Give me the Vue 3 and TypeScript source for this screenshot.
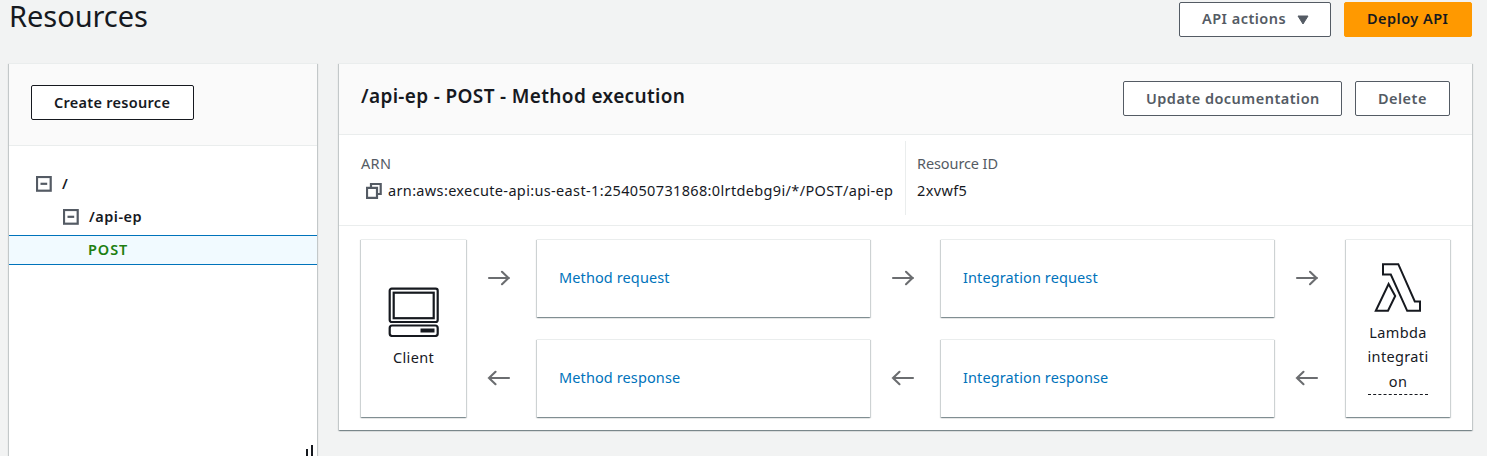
<script setup lang="ts">
interface FlowCard {
  label: string
  key: string
}

const requestCards: FlowCard[] = [
  { label: 'Method request', key: 'mreq' },
  { label: 'Integration request', key: 'ireq' },
]
const responseCards: FlowCard[] = [
  { label: 'Method response', key: 'mres' },
  { label: 'Integration response', key: 'ires' },
]
</script>

<template>
  <div class="page">
    <header class="top">
      <h1>Resources</h1>
      <div class="actions">
        <button class="btn b-actions">
          <span>API actions</span>
          <svg width="12" height="10" viewBox="0 0 12 10"><path d="M1 1h10L6 9z" fill="#545b64" stroke="#545b64" stroke-linejoin="round" /></svg>
        </button>
        <button class="btn primary b-deploy"><span>Deploy API</span></button>
      </div>
    </header>

    <div class="columns">
      <aside class="panel side">
        <div class="side-head">
          <button class="btn dark b-create"><span class="t-create">Create resource</span></button>
        </div>
        <ul class="tree">
          <li class="node root">
            <svg width="16" height="16" viewBox="0 0 16 16" fill="none" stroke="#545b64" stroke-width="2.2"><rect x="1" y="1" width="13.700" height="13.700" /><path d="M4.500 7.800h6.700" /></svg>
            <span>/</span>
          </li>
          <li class="node child">
            <svg width="16" height="16" viewBox="0 0 16 16" fill="none" stroke="#545b64" stroke-width="2.2"><rect x="1" y="1" width="13.700" height="13.700" /><path d="M4.500 7.800h6.700" /></svg>
            <span>/api-ep</span>
          </li>
          <li class="node selected"><span class="t-post">POST</span></li>
        </ul>
        <div class="grip"><i class="short"></i><i class="tall"></i></div>
      </aside>

      <main class="panel detail">
        <div class="detail-head">
          <h2><span>/api-ep - POST - Method execution</span></h2>
          <div class="actions">
            <button class="btn b-update"><span>Update documentation</span></button>
            <button class="btn b-delete"><span>Delete</span></button>
          </div>
        </div>

        <dl class="facts">
          <div class="fact arn">
            <dt><span>ARN</span></dt>
            <dd>
              <svg width="16" height="16" viewBox="0 0 16 16" fill="none" stroke="#545b64" stroke-width="2.2"><path d="M1 4.800h10v10H1z" /><path d="M5 4.800V1h9.700v10H11" /></svg>
              <span>arn:aws:execute-api:us-east-1:254050731868:0lrtdebg9i/*/POST/api-ep</span>
            </dd>
          </div>
          <div class="fact rid">
            <dt><span class="t-ridl">Resource ID</span></dt>
            <dd><span>2xvwf5</span></dd>
          </div>
        </dl>

        <div class="flow">
          <div class="card end client">
            <svg width="52" height="50" viewBox="0 0 52 50" fill="none" stroke="#16191f" stroke-width="2.2">
              <rect x="1.700" y="1.700" width="48" height="33.300" rx="2" />
              <rect x="5.700" y="5.700" width="40" height="25.500" />
              <rect x="1.700" y="38.500" width="48" height="10.500" rx="2.500" />
              <rect x="32.500" y="41.500" width="14" height="4" fill="#16191f" stroke="none" />
            </svg>
            <span>Client</span>
          </div>

          <template v-for="c in requestCards" :key="c.key">
            <div class="arrow">
              <svg width="24" height="16" viewBox="0 0 24 16"><path d="M2 8h20M15 1.800l6.500 6.200-6.500 6.200" /></svg>
            </div>
            <div class="card step"><a>{{ c.label }}</a></div>
          </template>
          <div class="arrow">
            <svg width="24" height="16" viewBox="0 0 24 16"><path d="M2 8h20M15 1.800l6.500 6.200-6.500 6.200" /></svg>
          </div>

          <div class="card end lambda">
            <svg width="48" height="50" viewBox="0 0 48 50" fill="none" stroke="#16191f" stroke-width="2">
              <path d="M9 1.200h15.300l16.500 37.200H46V47.800H33.200L16.800 11.500H9z" />
              <path d="M14.600 21L21.200 33 14 47.800H1.800z" />
            </svg>
            <span class="popover"><span>Lambda</span><span>integrati</span><span>on</span></span>
          </div>

          <template v-for="c in responseCards" :key="c.key">
            <div class="arrow">
              <svg width="24" height="16" viewBox="0 0 24 16"><path d="M22 8H2M8.500 1.800L2 8l6.500 6.200" /></svg>
            </div>
            <div class="card step"><a>{{ c.label }}</a></div>
          </template>
          <div class="arrow">
            <svg width="24" height="16" viewBox="0 0 24 16"><path d="M22 8H2M8.500 1.800L2 8l6.500 6.200" /></svg>
          </div>
        </div>
      </main>
    </div>
  </div>
</template>

<style>
body {
  background: #f2f3f3;
}
</style>

<style scoped>
* {
  box-sizing: border-box;
}
.page {
  height: 456px;
  overflow: hidden;
  background: #f2f3f3;
  font-family: 'Noto Sans', 'Open Sans', sans-serif;
  font-size: 14.5px;
  line-height: 22px;
  letter-spacing: 0.35px;
  color: #16191f;
  padding: 0 15px 0 9px;
}
span,
a {
  white-space: nowrap;
}
.top {
  height: 63px;
  display: flex;
  justify-content: space-between;
  align-items: flex-start;
  padding-top: 2px;
}
h1 {
  margin: -2px 0 0;
  font-size: 29px;
  font-weight: 400;
  line-height: 32px;
  letter-spacing: -0.05px;
}
.actions {
  display: flex;
  gap: 13px;
}
.btn {
  height: 35px;
  border: 1px solid #545b64;
  border-radius: 2px;
  background: #fff;
  color: #545b64;
  font: 600 14.5px/22px 'Noto Sans', 'Open Sans', sans-serif;
  letter-spacing: 0.47px;
  padding: 0 0 0 22px;
  display: flex;
  align-items: center;
}
.btn span,
.node span {
  margin-top: -2px;
}
.dark {
  border-color: #16191f;
  color: #16191f;
}
.t-create {
  letter-spacing: 0.28px;
}
.primary {
  background: #f90;
  border-color: #f90;
  color: #16191f;
}
.b-actions {
  width: 152px;
  justify-content: space-between;
  padding-right: 21px;
}
.b-deploy {
  width: 128px;
}
.top .btn span {
  margin-top: -4px;
}
.b-create {
  width: 163px;
}
.b-update {
  width: 219px;
}
.b-delete {
  width: 95px;
}
.columns {
  display: flex;
  gap: 22px;
  align-items: flex-start;
}
.panel {
  background: #fff;
  border-top: 1px solid #eaeded;
  box-shadow: 0 1px 1px 0 rgba(0, 28, 36, 0.3), 1px 1px 1px 0 rgba(0, 28, 36, 0.15), -1px 1px 1px 0 rgba(0, 28, 36, 0.15);
}
.side {
  width: 308px;
  height: 420px;
  display: flex;
  flex-direction: column;
}
.side-head {
  height: 82px;
  padding: 21px 22px;
  background: #fafafa;
  border-bottom: 1px solid #eaeded;
}
.tree {
  list-style: none;
  margin: 0;
  padding: 22px 0 0;
  font-weight: 600;
}
.node {
  display: flex;
  align-items: center;
  gap: 10px;
  height: 33px;
  padding-bottom: 1px;
  letter-spacing: 0.5px;
}
.root {
  padding-left: 27px;
}
.child {
  padding-left: 54px;
}
.selected {
  height: 30px;
  margin-top: 1px;
  padding-left: 79px;
  background: #f1faff;
  border-top: 1px solid #0073bb;
  border-bottom: 1px solid #0073bb;
  color: #1d7f12;
}
.t-post {
  letter-spacing: 0.9px;
}
.grip {
  margin-top: 180px;
  display: flex;
  gap: 3px;
  align-items: flex-end;
  justify-content: flex-end;
  padding-right: 4px;
  height: 14px;
}
.grip i {
  width: 2px;
  background: #16191f;
}
.short {
  height: 10px;
}
.tall {
  height: 14px;
}
.detail {
  width: 1133px;
  height: 367px;
}
.detail-head {
  height: 71px;
  background: #fafafa;
  border-bottom: 1px solid #eaeded;
  display: flex;
  justify-content: space-between;
  align-items: flex-start;
  padding: 17px 22px 0;
}
h2 {
  margin: 4px 0 0;
  font-size: 19px;
  line-height: 22px;
  font-weight: 600;
  letter-spacing: 0.35px;
}
.facts {
  margin: 0;
  height: 91px;
  display: flex;
  border-bottom: 1px solid #eaeded;
  padding: 6px 22px 10px;
}
.fact {
  padding-top: 11px;
}
.arn {
  width: 545px;
  border-right: 1px solid #eaeded;
}
.rid {
  padding-left: 11px;
}
dt {
  color: #545b64;
}
.t-ridl {
  letter-spacing: -0.1px;
}
dd {
  margin: 5px 0 0;
  display: flex;
  align-items: center;
}
dd svg {
  margin: 2px 6px 0 5px;
}
.flow {
  display: grid;
  grid-template-columns: 105px 71px 333px 71px 333px 72px 104px;
  grid-template-rows: 78px 78px;
  row-gap: 22px;
  padding: 13px 22px 0;
}
.card {
  background: #fff;
  border-top: 1px solid #eaeded;
  box-shadow: 0 1px 1px 0 rgba(0, 28, 36, 0.3), 1px 1px 1px 0 rgba(0, 28, 36, 0.15), -1px 1px 1px 0 rgba(0, 28, 36, 0.15);
}
.end {
  grid-row: 1 / 3;
  display: flex;
  flex-direction: column;
  align-items: center;
}
.client {
  grid-column: 1;
  padding-top: 47px;
  gap: 9px;
}
.lambda {
  grid-column: 7;
  padding-top: 23px;
  gap: 7px;
}
.popover {
  width: 60px;
  display: flex;
  flex-direction: column;
  align-items: center;
  line-height: 24.300px;
  padding-bottom: 1px;
  border-bottom: 1px dashed #16191f;
}
.step {
  display: flex;
  align-items: center;
  padding: 0 0 4px 22px;
}
.step a {
  color: #0073bb;
  letter-spacing: 0.11px;
}
.arrow {
  display: flex;
  align-items: center;
  padding: 0 0 1px 21px;
}
.arrow svg {
  fill: none;
  stroke: #6b6d70;
  stroke-width: 2.1;
  stroke-linecap: round;
}
</style>
